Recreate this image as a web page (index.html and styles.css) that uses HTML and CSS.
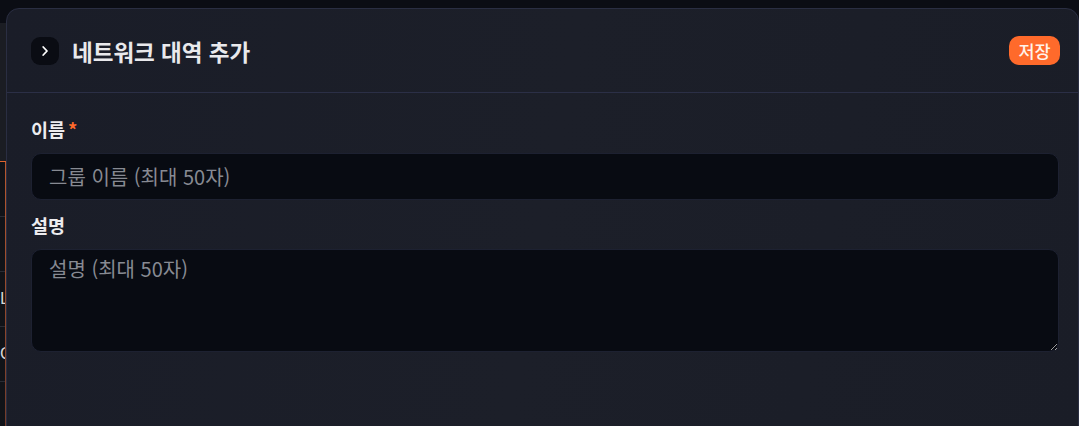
FILE: index.html
```html
<!DOCTYPE html>
<html lang="ko">
<head>
<meta charset="utf-8">
<link rel="stylesheet" href="styles.css">
</head>
<body>
<div class="backdrop">
  <div class="bd-top"></div>
  <div class="bd-head"></div>
  <div class="bd-rows">
    <div class="bd-row"></div>
    <div class="bd-row"></div>
    <div class="bd-row"><span>LAN</span></div>
    <div class="bd-row"><span>CIDR</span></div>
    <div class="bd-row"></div>
  </div>
</div>
<section class="panel">
  <header class="panel-head">
    <div class="head-left">
      <button class="chev" type="button">
        <svg width="12" height="12" viewBox="0 0 12 12"><path d="M4.2 2l3.8 4-3.8 4" fill="none" stroke="#ffffff" stroke-width="1.8" stroke-linecap="round" stroke-linejoin="round"/></svg>
      </button>
      <h1 class="title">네트워크 대역 추가</h1>
    </div>
    <button class="save" type="button">저장</button>
  </header>
  <div class="panel-body">
    <label class="label">이름<span class="req">*</span></label>
    <input class="field" type="text" placeholder="그룹 이름 (최대 50자)">
    <label class="label label-2">설명</label>
    <textarea class="field area" placeholder="설명 (최대 50자)"></textarea>
  </div>
</section>
</body>
</html>
```
FILE: styles.css
```css
* { box-sizing: border-box; }
html, body { margin: 0; height: 100%; }
body {
  background: #0b0d14;
  font-family: "Noto Sans CJK KR", "Noto Sans", sans-serif;
  overflow: hidden;
  position: relative;
}
.backdrop { width: 200px; display: flex; flex-direction: column; }
.bd-top { height: 23px; background: #0b0d14; }
.bd-head { height: 139px; background: #1b1d23; border-bottom: 1px solid #e0642e; }
.bd-rows {
  background: #111318;
  position: relative;
}
.bd-rows::after {
  content: ""; position: absolute; left: 5px; top: 0; bottom: 0; width: 2px;
  background: linear-gradient(180deg, #b8582e, #6e3a2a);
}
.bd-row {
  height: 55px; border-bottom: 1px solid #2a2c34;
  color: #d8d8d8; font: 15px "DejaVu Sans", sans-serif;
  display: flex; align-items: center; overflow: hidden;
}
.panel {
  position: absolute; left: 6px; top: 8px; right: 0; bottom: -20px;
  background: linear-gradient(100deg, #1a1d28 0%, #1c1f29 50%, #1a1d27 100%);
  border: 1px solid #2a2e42;
  border-radius: 13px;
  display: flex; flex-direction: column;
}
.panel-head {
  height: 84px;
  display: flex; align-items: center; justify-content: space-between;
  padding: 0 18px 0 24px;
  border-bottom: 1px solid #2b2f46;
}
.head-left { display: flex; align-items: center; gap: 13px; }
.chev {
  width: 28px; height: 28px; border: none; border-radius: 9px;
  background: #0a0c13; display: flex; align-items: center; justify-content: center; padding: 0;
}
.title {
  margin: 0; color: #e9e9ec; font-size: 22.5px; font-weight: 700; letter-spacing: 0;
}
.save {
  width: 51px; height: 29px; border: none; border-radius: 10px;
  background: #ff6a2b; color: #fff3ea; font-family: inherit; font-size: 17.5px; font-weight: 500; padding: 0;
}
.panel-body {
  padding: 23px 19px 0 24px;
  display: flex; flex-direction: column;
}
.label { color: #ececef; font-size: 18.5px; font-weight: 700; line-height: 26px; display: block; }
.req { color: #ff6a2b; margin-left: 3px; }
.field {
  margin-top: 11px;
  height: 47px;
  background: #080b12;
  border: 1px solid #1d2131;
  border-radius: 10px;
  color: #e0e0e0;
  font-family: inherit; font-size: 20px;
  padding: 0 17px;
  outline: none;
}
.field::placeholder { color: #878a92; }
.label-2 { margin-top: 12px; }
.area { height: 103px; padding: 4px 17px; resize: vertical; line-height: 30px; }
```
